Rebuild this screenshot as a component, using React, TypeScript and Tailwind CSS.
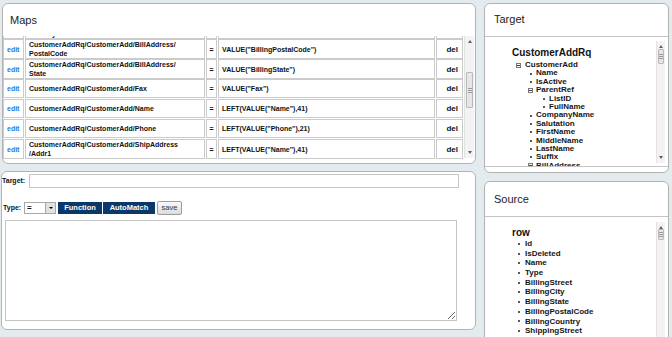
import React from "react";

type MapRow = { path: string[]; value: string };

const rows: MapRow[] = [
  { path: ["CustomerAddRq/CustomerAdd/BillAddress/", "Country"], value: 'VALUE("BillingCountry")' },
  { path: ["CustomerAddRq/CustomerAdd/BillAddress/", "PostalCode"], value: 'VALUE("BillingPostalCode")' },
  { path: ["CustomerAddRq/CustomerAdd/BillAddress/", "State"], value: 'VALUE("BillingState")' },
  { path: ["CustomerAddRq/CustomerAdd/Fax"], value: 'VALUE("Fax")' },
  { path: ["CustomerAddRq/CustomerAdd/Name"], value: 'LEFT(VALUE("Name"),41)' },
  { path: ["CustomerAddRq/CustomerAdd/Phone"], value: 'LEFT(VALUE("Phone"),21)' },
  { path: ["CustomerAddRq/CustomerAdd/ShipAddress", "/Addr1"], value: 'LEFT(VALUE("Name"),41)' },
];

type Node = { label: string; level: 1 | 2 | 3; folder?: boolean };

const targetTree: Node[] = [
  { label: "CustomerAdd", level: 1, folder: true },
  { label: "Name", level: 2 },
  { label: "IsActive", level: 2 },
  { label: "ParentRef", level: 2, folder: true },
  { label: "ListID", level: 3 },
  { label: "FullName", level: 3 },
  { label: "CompanyName", level: 2 },
  { label: "Salutation", level: 2 },
  { label: "FirstName", level: 2 },
  { label: "MiddleName", level: 2 },
  { label: "LastName", level: 2 },
  { label: "Suffix", level: 2 },
  { label: "BillAddress", level: 2, folder: true },
  { label: "Addr1", level: 3 },
];

const sourceFields = [
  "Id",
  "IsDeleted",
  "Name",
  "Type",
  "BillingStreet",
  "BillingCity",
  "BillingState",
  "BillingPostalCode",
  "BillingCountry",
  "ShippingStreet",
  "ShippingCity",
];

// small scrollbar, thumb position comes in as classes
function VScroll({ className, thumb }: { className: string; thumb: string }) {
  return (
    <div className={"flex flex-col bg-[#f3f3f3] border-l border-[#e2e2e2] shrink-0 " + className}>
      <div className="h-[11px] flex items-center justify-center">
        <span className="w-0 h-0 border-x-[2.5px] border-x-transparent border-b-[3px] border-b-[#606060]" />
      </div>
      <div className={"mx-[1px] rounded-[1px] border border-[#b9b9b9] bg-[#e6e6e6] flex flex-col items-center justify-center gap-[1px] " + thumb}>
        <span className="w-[4px] h-px bg-[#9a9a9a]" />
        <span className="w-[4px] h-px bg-[#9a9a9a]" />
        <span className="w-[4px] h-px bg-[#9a9a9a]" />
      </div>
      <div className="flex-1" />
      <div className="h-[11px] flex items-center justify-center">
        <span className="w-0 h-0 border-x-[2.5px] border-x-transparent border-t-[3px] border-t-[#606060]" />
      </div>
    </div>
  );
}

function Bullet() {
  return <span className="w-[2px] h-[2px] rounded-full bg-[#222]" />;
}

function MinusBox() {
  return (
    <span className="w-[5px] h-[5px] border border-[#777] flex items-center justify-center">
      <span className="w-[3px] h-px bg-[#444]" />
    </span>
  );
}

function TreeRow({ node }: { node: Node }) {
  const pad = node.level === 1 ? "pl-[4px] w-[13px]" : node.level === 2 ? "pl-[16px] w-[24px]" : "pl-[29px] w-[37px]";
  return (
    <div className="flex items-center h-[8.4px]">
      <span className={"flex items-center shrink-0 " + pad}>
        {node.folder ? <MinusBox /> : <span className="ml-[2px] flex"><Bullet /></span>}
      </span>
      <span className="text-[8px] font-bold leading-[8.4px] text-[#151515] whitespace-nowrap">{node.label}</span>
    </div>
  );
}

export default function App() {
  return (
    <div className="w-[672px] h-[337px] overflow-hidden bg-[#e4ebee] flex font-['Liberation_Sans',Arial,sans-serif] text-[#111]">
      {/* left column */}
      <div className="w-[474px] ml-[2px] pt-[3px] flex flex-col gap-[7px] shrink-0">
        {/* Maps */}
        <div className="h-[161px] shrink-0 rounded-[6px] border border-[#b3b3b3] bg-white flex flex-col overflow-hidden">
          <div className="h-[32px] pl-[7px] flex items-center text-[11px] text-[#222] shrink-0">Maps</div>
          <div className="flex h-[123px]">
            <div className="w-[460px] overflow-hidden">
              <div className="-mt-[17px] flex flex-col gap-y-[1px]">
                {rows.map((r, i) => (
                  <div key={i} className="grid grid-cols-[21px_180px_11px_217px_27px] gap-x-[1px] h-[19px] text-[7px] font-bold leading-[9px]">
                    <div className="border border-[#cbcbcb] pl-[3px] flex items-center text-[#2a78dd]">edit</div>
                    <div className="border border-[#cbcbcb] pl-[3px] flex items-center">
                      <span>
                        {r.path.map((p, j) => (
                          <React.Fragment key={j}>
                            {j > 0 && <br />}
                            {p}
                          </React.Fragment>
                        ))}
                      </span>
                    </div>
                    <div className="border border-[#cbcbcb] flex items-center justify-center">=</div>
                    <div className="border border-[#cbcbcb] pl-[3px] flex items-center">{r.value}</div>
                    <div className="border border-[#cbcbcb] pr-[4px] flex items-center justify-end text-[8px]">del</div>
                  </div>
                ))}
              </div>
            </div>
            <VScroll className="ml-[1px] w-[10px] h-[122px]" thumb="mt-[25px] h-[36px]" />
          </div>
        </div>

        {/* editor */}
        <div className="h-[159px] shrink-0 -ml-[1px] rounded-[6px] border border-[#b3b3b3] bg-white flex flex-col">
          <div className="mt-[2px] flex items-center gap-[2px]">
            <span className="w-[25px] text-[7px] font-bold">Target:</span>
            <input className="w-[430px] h-[14px] border border-[#c6c6c6] outline-none" />
          </div>
          <div className="mt-[13px] ml-[1px] flex items-center h-[14px]">
            <span className="w-[21px] text-[7px] font-bold">Type:</span>
            <div className="w-[32px] h-[12px] border border-[#a8a8a8] flex items-center justify-between bg-white">
              <span className="pl-[2px] text-[8px] font-bold leading-none">=</span>
              <span className="w-[10px] h-[10px] bg-[#e2e2e2] border-l border-[#a8a8a8] flex items-center justify-center">
                <span className="w-0 h-0 border-x-[2px] border-x-transparent border-t-[2.5px] border-t-black" />
              </span>
            </div>
            <button className="ml-[2px] w-[44px] h-[12px] bg-[#0b386a] text-white text-[7.5px] font-bold leading-none">Function</button>
            <button className="ml-[1px] w-[52px] h-[12px] bg-[#0b386a] text-white text-[7.5px] font-bold leading-none">AutoMatch</button>
            <button className="ml-[2px] w-[25px] h-[14px] rounded-[2px] border border-[#9d9d9d] bg-gradient-to-b from-[#fafafa] to-[#dcdcdc] text-[7.5px] text-[#333] leading-none">save</button>
          </div>
          <textarea className="mt-[5px] ml-[3px] w-[452px] h-[101px] border border-[#c3c3c3] outline-none resize" />
        </div>
      </div>

      {/* right column */}
      <div className="ml-[8px] w-[185px] pt-[3px] flex flex-col gap-[8px] shrink-0">
        {/* Target tree */}
        <div className="h-[170px] shrink-0 rounded-[6px] border border-[#b3b3b3] bg-white flex flex-col overflow-hidden">
          <div className="h-[33px] pl-[9px] pb-[1px] flex items-center text-[11px] text-[#222] border-b border-[#c4c4c4] shrink-0">Target</div>
          <div className="flex-1 flex overflow-hidden">
            <div className="flex-1 pl-[27px] pt-[10px] overflow-hidden">
              <div className="text-[10px] font-bold leading-[12px]">CustomerAddRq</div>
              <div className="mt-[2px]">
                {targetTree.map((n, i) => (
                  <TreeRow key={i} node={n} />
                ))}
              </div>
            </div>
            <VScroll className="mt-[4px] mr-[3px] w-[9px] h-[122px]" thumb="mt-[-3px] h-[15px]" />
          </div>
          <div className="h-[6px] border-t border-[#c4c4c4] shrink-0" />
        </div>

        {/* Source tree */}
        <div className="h-[170px] shrink-0 rounded-[6px] border border-[#b3b3b3] bg-white flex flex-col overflow-hidden">
          <div className="h-[35px] pl-[9px] flex items-center text-[11px] text-[#222] border-b border-[#c4c4c4] shrink-0">Source</div>
          <div className="flex-1 flex overflow-hidden">
            <div className="flex-1 pl-[27px] pt-[10px] overflow-hidden">
              <div className="text-[10px] font-bold leading-[12px]">row</div>
              {sourceFields.map((f, i) => (
                <div key={i} className="flex items-center h-[9.7px]">
                  <span className="pl-[6px] w-[13px] flex items-center shrink-0">
                    <Bullet />
                  </span>
                  <span className="text-[8px] font-bold leading-[9.7px] text-[#151515] whitespace-nowrap">{f}</span>
                </div>
              ))}
            </div>
            <VScroll className="mt-[5px] mr-[3px] w-[9px] h-[130px]" thumb="mt-[-4px] h-[11px]" />
          </div>
        </div>
      </div>
    </div>
  );
}
